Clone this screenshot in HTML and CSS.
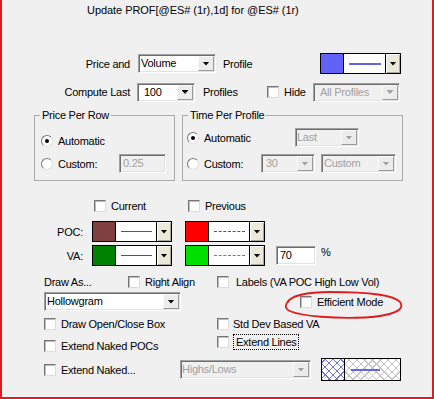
FILE: index.html
```html
<!DOCTYPE html>
<html>
<head>
<meta charset="utf-8">
<link rel="stylesheet" href="styles.css">
</head>
<body>
<div class="dialog">
  <div class="title">Update PROF[@ES# (1r),1d] for @ES# (1r)</div>

  <div class="row row-price">
    <span class="field-label">Price and</span>
    <div class="select sel-volume"><span class="val">Volume</span><span class="btn"><i class="tri"></i></span></div>
    <span class="txt profile-label">Profile</span>
    <div class="colorbox">
      <span class="sw sw-blue"></span>
      <span class="lnarea"><i class="line line-blue"></i></span>
      <span class="cbtn"><i class="tri"></i></span>
    </div>
  </div>

  <div class="row row-compute">
    <span class="field-label">Compute Last</span>
    <div class="select sel-count"><span class="val">100</span><span class="btn"><i class="tri"></i></span></div>
    <span class="txt profiles-label">Profiles</span>
    <span class="check hide-check"><i class="cb"></i><span>Hide</span></span>
    <div class="select dis sel-all"><span class="val">All Profiles</span><span class="btn"><i class="tri"></i></span></div>
  </div>

  <div class="row row-groups">
    <fieldset class="group group-price">
      <legend>Price Per Row</legend>
      <div class="grow g-price-a"><i class="radio on"></i><span class="txt">Automatic</span></div>
      <div class="grow g-price-b"><i class="radio"></i><span class="txt custom-price">Custom:</span><span class="input dis in-price">0.25</span></div>
    </fieldset>
    <fieldset class="group group-time">
      <legend>Time Per Profile</legend>
      <div class="grow g-time-a"><i class="radio on"></i><span class="txt auto-time">Automatic</span><div class="select dis sel-last"><span class="val">Last</span><span class="btn"><i class="tri"></i></span></div></div>
      <div class="grow g-time-b"><i class="radio"></i><span class="txt custom-time">Custom:</span><div class="select dis sel-30"><span class="val">30</span><span class="btn"><i class="tri"></i></span></div><div class="select dis sel-custom"><span class="val">Custom</span><span class="btn"><i class="tri"></i></span></div></div>
    </fieldset>
  </div>

  <div class="row row-current">
    <span class="check current-check"><i class="cb"></i><span>Current</span></span>
    <span class="check"><i class="cb"></i><span>Previous</span></span>
  </div>

  <div class="row row-poc">
    <span class="side-label">POC:</span>
    <div class="colorbox cb-first">
      <span class="sw sw-brown"></span>
      <span class="lnarea"><i class="line line-brown"></i></span>
      <span class="cbtn"><i class="tri"></i></span>
    </div>
    <div class="colorbox cb-second">
      <span class="sw sw-red"></span>
      <span class="lnarea"><i class="line line-red-dash"></i></span>
      <span class="cbtn"><i class="tri"></i></span>
    </div>
  </div>

  <div class="row row-va">
    <span class="side-label">VA:</span>
    <div class="colorbox cb-first">
      <span class="sw sw-green"></span>
      <span class="lnarea"><i class="line line-green"></i></span>
      <span class="cbtn"><i class="tri"></i></span>
    </div>
    <div class="colorbox cb-second">
      <span class="sw sw-lime"></span>
      <span class="lnarea"><i class="line line-lime-dash"></i></span>
      <span class="cbtn"><i class="tri"></i></span>
    </div>
    <span class="input in-va">70</span>
    <span class="txt pct">%</span>
  </div>

  <div class="row row-draw">
    <span class="txt draw-as">Draw As...</span>
    <span class="check right-align"><i class="cb"></i><span>Right Align</span></span>
    <span class="check"><i class="cb"></i><span class="labels-text">Labels (VA POC High Low Vol)</span></span>
  </div>

  <div class="row row-hollow">
    <div class="select sel-hollow"><span class="val">Hollowgram</span><span class="btn"><i class="tri"></i></span></div>
    <span class="check efficient"><i class="cb"></i><span>Efficient Mode</span></span>
  </div>

  <div class="row row-open">
    <span class="check left-col"><i class="cb"></i><span>Draw Open/Close Box</span></span>
    <span class="check tight"><i class="cb"></i><span>Std Dev Based VA</span></span>
  </div>

  <div class="row row-ext">
    <span class="check left-col ext-left"><i class="cb"></i><span>Extend Naked POCs</span></span>
    <span class="check tight ext-right"><i class="cb"></i><span class="focus">Extend Lines</span></span>
  </div>

  <div class="row row-naked">
    <span class="check naked-check"><i class="cb"></i><span>Extend Naked...</span></span>
    <div class="select dis sel-highs"><span class="val">Highs/Lows</span><span class="btn"><i class="tri"></i></span></div>
    <div class="hatchbox">
      <span class="hsw"></span>
      <span class="harea"><i class="line line-blue"></i></span>
    </div>
  </div>

  <svg class="mark" width="130" height="40" viewBox="280 284 130 40">
    <path d="M 288 302 C 290 296, 307 292, 330 292 C 362 292, 393 294, 400 302 C 406 310, 392 316, 365 317.5 C 335 319, 302 316, 291 311.5 C 285 309, 284 306, 289 300" fill="none" stroke="#e21c1c" stroke-width="1.8" stroke-linecap="round"/>
  </svg>
</div>
</body>
</html>
```

FILE: styles.css
```css
* { box-sizing: border-box; }

body {
  margin: 0;
  background: #f0f0f0;
  font-family: "Liberation Sans", Arial, sans-serif;
  font-size: 11px;
  color: #000;
}

.dialog {
  position: relative;
  width: 434px;
  height: 399px;
  background: #f0f0f0;
  border: 2px solid #e21c1c;
  border-top: 0;
  letter-spacing: -0.25px;
}

.title {
  height: 20px;
  line-height: 20px;
  padding-left: 85px;
  white-space: nowrap;
  letter-spacing: -0.05px;
}

.row {
  display: flex;
  align-items: center;
  white-space: nowrap;
}

.txt { line-height: 14px; }

.field-label {
  width: 128px;
  text-align: right;
  line-height: 14px;
}

/* ---------- combo boxes ---------- */
.select {
  display: flex;
  height: 19px;
  padding: 1px;
  background: #fff;
  border: 1px solid;
  border-color: #a0a0a0 #fff #fff #a0a0a0;
  box-shadow: inset 1px 1px 0 #6e6e6e, inset -1px -1px 0 #e3e3e3;
  flex: none;
}
.select .val {
  flex: 1;
  line-height: 15px;
  padding-left: 1px;
  overflow: hidden;
}
.select .btn {
  width: 16px;
  display: flex;
  align-items: center;
  justify-content: center;
  background: #ececec;
  border: 1px solid;
  border-color: #fafafa #9a9a9a #9a9a9a #fafafa;
}
.tri {
  display: block;
  width: 7px;
  height: 4px;
  background: #000;
  clip-path: polygon(0 0, 100% 0, 50% 100%);
}
.select.dis { background: #f0f0f0; }
.select.dis .val { color: #a0a0a0; }
.select.dis .tri { background: #a0a0a0; }

.sel-volume { width: 78px; margin-left: 8px; }
.sel-count { width: 58px; margin-left: 7px; }
.sel-count .val { padding-left: 5px; }
.sel-all { width: 87px; }
.sel-all .val { padding-left: 5px; }
.sel-last { width: 64px; }
.sel-last .val { padding-left: 0; }
.sel-30 { width: 54px; }
.sel-30 .val { padding-left: 3px; }
.sel-custom { width: 75px; margin-left: 6px; }
.sel-hollow { width: 137px; }
.sel-highs { width: 131px; }
.sel-highs .val { padding-left: 0; }

/* ---------- text inputs ---------- */
.input {
  display: block;
  height: 19px;
  padding-left: 3px;
  line-height: 17px;
  background: #fff;
  border: 1px solid;
  border-color: #a0a0a0 #fff #fff #a0a0a0;
  box-shadow: inset 1px 1px 0 #6e6e6e, inset -1px -1px 0 #e3e3e3;
  flex: none;
}
.input.dis { background: #f0f0f0; color: #a0a0a0; }
.in-price { width: 47px; }
.in-va { width: 40px; margin-left: 11px; }
.pct { margin-left: 5px; align-self: flex-start; }

/* ---------- checkboxes / radios ---------- */
.check {
  display: flex;
  align-items: center;
  gap: 5px;
  line-height: 14px;
  flex: none;
}
.check.tight { gap: 4px; }
.cb {
  display: block;
  width: 12px;
  height: 12px;
  background: #fff;
  border: 1px solid;
  border-color: #767676 #dcdcdc #dcdcdc #767676;
  box-shadow: inset 1px 1px 0 #bcbcbc;
  flex: none;
}
.radio {
  display: flex;
  align-items: center;
  justify-content: center;
  width: 12px;
  height: 12px;
  border-radius: 50%;
  background: #fff;
  border: 1px solid;
  border-color: #767676 #dedede #dedede #767676;
  flex: none;
}
.radio.on::after {
  content: "";
  width: 4px;
  height: 4px;
  border-radius: 50%;
  background: #000;
}

/* ---------- colour / style pickers ---------- */
.colorbox {
  display: flex;
  width: 81px;
  height: 21px;
  border: 1px solid #000;
  background: #fff;
  flex: none;
}
.colorbox .sw { width: 23px; border-right: 1px solid #000; }
.lnarea, .harea {
  flex: 1;
  display: flex;
  align-items: center;
  padding: 0 4px 0 5px;
}
.line { display: block; flex: 1; height: 0; border-top: 1px solid transparent; }
.cbtn {
  width: 15px;
  display: flex;
  align-items: center;
  justify-content: center;
  background: #ece9d8;
  border-left: 1px solid #000;
  box-shadow: inset 1px 1px 0 #fff, inset -1px -1px 0 #aca899;
}

.sw-blue { background: #6262fa; }
.sw-brown { background: #7f3f3f; }
.sw-red { background: #ff0000; }
.sw-green { background: #008000; }
.sw-lime { background: #00e000; }

.line-blue { border-top: 2px solid #6464e6; }
.line-brown { border-top-color: #8c4646; }
.line-green { border-top-color: #0a8c0a; }
.line-red-dash { border-top: 1px dashed #e8103c; }
.line-lime-dash { border-top: 1px dashed #00d000; }

.hatchbox {
  display: flex;
  width: 80px;
  height: 23px;
  margin-left: 10px;
  border: 1px solid #000;
  background: #fff;
  flex: none;
}
.hsw {
  width: 23px;
  border-right: 1px solid #000;
  background-image:
    repeating-linear-gradient(45deg, #7474e4 0 1px, transparent 1px 5.5px),
    repeating-linear-gradient(-45deg, #7474e4 0 1px, transparent 1px 5.5px);
}
.harea {
  padding: 0 20px 0 6px;
  background-image:
    repeating-linear-gradient(45deg, #c4c4c4 0 1px, transparent 1px 5.5px),
    repeating-linear-gradient(-45deg, #c4c4c4 0 1px, transparent 1px 5.5px);
}

/* ---------- rows ---------- */
.row-price { margin-top: 33px; height: 21px; }
.profile-label { width: 97px; margin-left: 7px; }

.row-compute { margin-top: 8px; height: 20px; }
.profiles-label { width: 64px; margin-left: 8px; }
.hide-check { width: 46px; }

.row-groups { margin-top: 7px; padding-left: 32px; align-items: flex-start; }
.group {
  margin: 0;
  padding: 0;
  min-width: 0;
  height: 72px;
  border: 1px solid #a9a9a9;
}
.group legend {
  padding: 0 2px;
  margin-left: 5px;
  line-height: 13px;
}
.group-price { width: 141px; }
.group-time { width: 221px; margin-left: 7px; }
.grow { display: flex; align-items: center; gap: 5px; white-space: nowrap; }
.g-price-a { margin-top: 9px; height: 20px; padding-left: 6px; }
.g-price-b { margin-top: 3px; height: 19px; padding-left: 6px; }
.custom-price { width: 56px; }
.g-time-a { margin-top: 6px; height: 19px; padding-left: 4px; }
.g-time-b { margin-top: 7px; height: 19px; padding-left: 4px; }
.auto-time { width: 86px; }
.custom-time { width: 52px; }
.g-time-b .sel-custom { margin-left: 1px; }

.row-current { margin-top: 18px; height: 14px; padding-left: 92px; }
.current-check { width: 94px; }

.row-poc { margin-top: 8px; height: 21px; }
.row-va { margin-top: 3px; height: 21px; }
.side-label { width: 81px; text-align: right; line-height: 14px; }
.cb-first { width: 80px; margin-left: 9px; }
.cb-second { width: 80px; margin-left: 13px; }

.row-draw { margin-top: 9px; height: 14px; padding-left: 42px; }
.draw-as { width: 84px; }
.right-align { width: 89px; }
.labels-text { margin-left: 2px; }

.row-hollow { margin-top: 3px; height: 19px; padding-left: 42px; }
.efficient { margin-left: 119px; }

.row-open { margin-top: 6px; height: 14px; padding-left: 42px; }
.left-col { width: 173px; }

.row-ext { margin-top: 6px; height: 14px; padding-left: 42px; align-items: flex-start; }
.ext-left { margin-top: 2px; }
.ext-right { margin-top: -3px; }
.focus { border: 1px dotted #000; padding: 0 1px 0 2px; line-height: 14px; }

.row-naked { margin-top: 7px; height: 23px; padding-left: 42px; }
.naked-check { width: 136px; }

.mark {
  position: absolute;
  left: 278px;
  top: 284px;
  pointer-events: none;
}
```
